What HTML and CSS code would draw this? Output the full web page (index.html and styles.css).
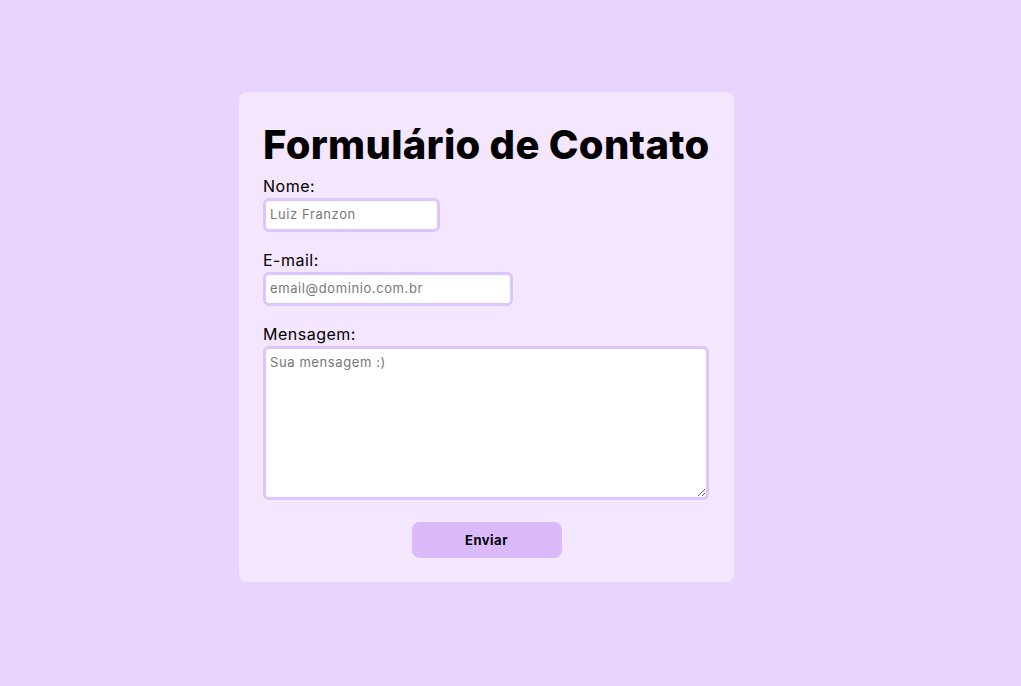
FILE: index.html
```html
<!DOCTYPE html>
<html lang="pt-BR">
<head>
<meta charset="utf-8">
<title>Formulário de Contato</title>
<link rel="stylesheet" href="styles.css">
</head>
<body>
<main class="card">
  <h1 class="title">Formulário de Contato</h1>
  <form class="form">
    <label class="label" for="nome">Nome:</label>
    <input class="field field-name" id="nome" type="text" placeholder="Luiz Franzon">
    <label class="label" for="email">E-mail:</label>
    <input class="field field-email" id="email" type="email" placeholder="email@dominio.com.br">
    <label class="label" for="msg">Mensagem:</label>
    <textarea class="field field-msg" id="msg" placeholder="Sua mensagem :)"></textarea>
    <div class="actions">
      <button class="btn" type="submit">Enviar</button>
    </div>
  </form>
</main>
</body>
</html>
```

FILE: styles.css
```css
* { box-sizing: border-box; }
html, body { margin: 0; padding: 0; }
body {
  background: #e8d5fd;
  font-family: "Inter", "Liberation Sans", sans-serif;
  min-height: 686px;
  padding: 92px 0 0 239px;
}
.card {
  width: 495px;
  background: #f3e6fd;
  border-radius: 8px;
  padding: 24px;
}
.title {
  margin: 0;
  font-size: 40px;
  line-height: 58px;
  font-weight: 800;
  letter-spacing: 0.3px;
  color: #000;
}
.form {
  display: flex;
  flex-direction: column;
  align-items: flex-start;
}
.label {
  font-size: 16px;
  line-height: 24px;
  letter-spacing: 0.5px;
  color: #000;
}
.field {
  font-family: inherit;
  font-size: 13px;
  letter-spacing: 0.6px;
  color: #000;
  background: #fff;
  border: 3px solid #dcc4fc;
  border-radius: 6px;
  padding: 3px 4px 5px;
  height: 34px;
  margin: 0 0 16px 0;
  outline: none;
}
.field::placeholder { color: #777; }
.field-name { width: 177px; }
.field-email { width: 250px; }
.field-msg {
  width: 446px;
  height: 154px;
  margin-bottom: 22px;
  line-height: 20px;
  padding: 3px 4px;
  resize: both;
}
.actions {
  align-self: stretch;
  display: flex;
  justify-content: center;
}
.btn {
  width: 150px;
  height: 36px;
  border: none;
  border-radius: 8px;
  background: #dbbafc;
  font-family: inherit;
  font-weight: 700;
  font-size: 13px;
  letter-spacing: 0.5px;
  color: #000;
}
```
